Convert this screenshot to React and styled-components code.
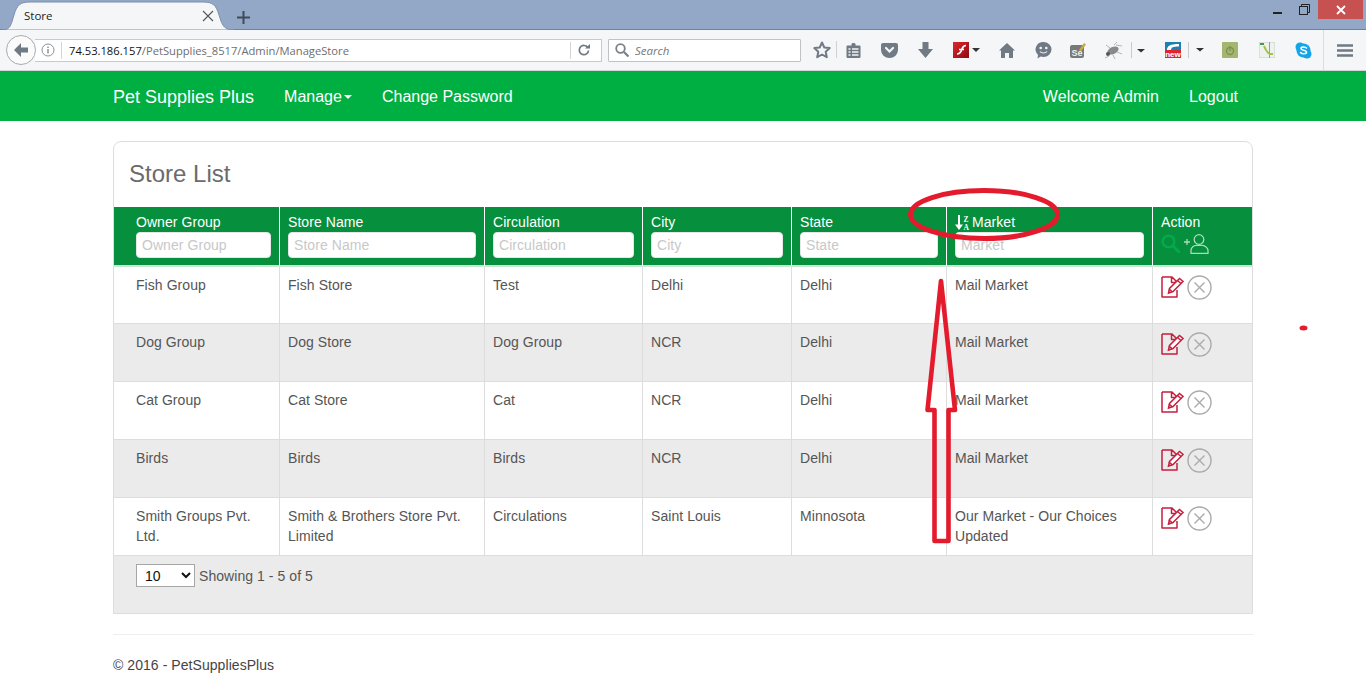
import React from "react";
import styled, { createGlobalStyle } from "styled-components";

const Global = createGlobalStyle`
  html, body { margin: 0; padding: 0; background: #fff; overflow: hidden; }
  body { font-family: "Liberation Sans", Arial, sans-serif; font-size: 14px; color: #555; }
  * { box-sizing: border-box; }
`;

const Page = styled.div`position: relative; width: 1366px; height: 686px; overflow: hidden;`;

/* ---------- browser chrome ---------- */
const TitleBar = styled.div`
  display: flex; align-items: flex-end; height: 30px; background: #93a8c6;
  border-bottom: 1px solid #6f829c; padding-left: 2px;
`;
const Tab = styled.div`
  position: relative; width: 232px; height: 29px; margin-bottom: -1px; display: flex; align-items: center;
  padding: 0 0 0 22px; font: 11.5px "Open Sans", "Noto Sans", sans-serif; color: #222;
`;
const TabShape = styled.svg`position: absolute; left: 0; top: 0;`;
const TabLabel = styled.span`position: relative; flex: 1;`;
const TabClose = styled.svg`position: relative; margin-right: 20px;`;
const PlusIcon = styled.svg`margin: 0 0 5px 3px;`;
const Spacer = styled.div`flex: 1;`;
const WindowControls = styled.div`display: flex; align-self: flex-start; align-items: flex-start; padding-right: 3px;`;
const WinButton = styled.div`
  width: ${p => p.$w}px; height: 19px; display: flex; align-items: center; justify-content: center;
  background: ${p => p.$bg || "transparent"};
`;
const Toolbar = styled.div`
  display: flex; align-items: center; height: 41px; background: #f5f6f7; padding-left: 6px;
  border-bottom: 1px solid #d4d5d7;
`;
const BackButton = styled.div`
  width: 30px; height: 30px; border-radius: 50%; background: #fbfbfb; border: 1px solid #a9abae;
  display: flex; align-items: center; justify-content: center; position: relative; z-index: 1; flex: none;
`;
const UrlBar = styled.div`
  display: flex; align-items: center; width: 567px; height: 23px; margin-left: -1px; padding-left: 6px;
  background: #fff; border: 1px solid #c8cacd; border-left: 0;
  font: 11.2px "Open Sans", "Noto Sans", sans-serif; color: #6e6e6e;
`;
const UrlDivider = styled.span`width: 1px; height: 17px; background: #d4d4d4; margin: ${p => p.$m};`;
const UrlHost = styled.span`color: #111;`;
const UrlFill = styled.span`flex: 1; white-space: nowrap;`;
const ReloadIcon = styled.svg`margin-right: 11px;`;
const SearchBox = styled.div`
  display: flex; align-items: center; gap: 6px; width: 193px; height: 23px; margin-left: 6px; padding-left: 6px;
  background: #fff; border: 1px solid #c0c2c5; border-radius: 1px;
  font: italic 11.5px "Open Sans", "Noto Sans", sans-serif; color: #777;
`;
const ToolSlots = styled.div`display: flex; align-items: center; margin-left: 4px; height: 100%;`;
const Slot = styled.div`
  width: ${p => p.$w}px; height: 100%; flex: none; display: flex; align-items: center; justify-content: center;
  border-left: ${p => (p.$sep ? "1px solid #dcdddf" : "0")};
`;

const Star = () => (
  <svg width="34" height="18" viewBox="0 0 34 18"><path d="M9 1.500l2.300 5 5.400.6-4 3.700 1.100 5.400L9 13.500l-4.800 2.700 1.100-5.400-4-3.700 5.400-.6z" fill="none" stroke="#6f7a84" strokeWidth="2" strokeLinejoin="round" transform="translate(8 0)"/><rect x="31" y="0" width="1" height="17" fill="#cfd1d4"/></svg>
);
const ReadingList = () => (
  <svg width="15" height="15" viewBox="0 0 15 15"><path d="M1.500 2.500h4V1a2 1 0 014 0v1.500h4a1 1 0 011 1V14a1 1 0 01-1 1h-12a1 1 0 01-1-1V3.500a1 1 0 011-1z" fill="#6f7a84"/><path d="M2.500 6h2M2.500 9h2M2.500 12h2M6 6h6.500M6 9h6.500M6 12h6.500" stroke="#f5f6f7" strokeWidth="1.300"/></svg>
);
const Pocket = () => (
  <svg width="17" height="15" viewBox="0 0 17 15"><path d="M2 0h13a2 2 0 012 2v5a8.500 8 0 01-17 0V2a2 2 0 012-2z" fill="#707b85"/><path d="M5 5l3.500 3.500L12 5" fill="none" stroke="#f5f6f7" strokeWidth="2.200" strokeLinecap="round"/></svg>
);
const Download = () => (
  <svg width="15" height="16" viewBox="0 0 15 16"><path d="M4.500 0h6v7H15l-7.500 9L0 7h4.500z" fill="#6f7a84"/></svg>
);
const Flash = () => (
  <svg width="28" height="16" viewBox="0 0 28 16"><defs><linearGradient id="fl" x1="0" y1="0" x2="1" y2="1"><stop offset="0" stopColor="#e0262b"/><stop offset="1" stopColor="#8a0d12"/></linearGradient></defs><rect width="16" height="16" fill="url(#fl)"/><path d="M4 12c3 0 4-2 5-5s2-3.500 4-3.500M6 7.500h5" fill="none" stroke="#fff" strokeWidth="1.700"/><path d="M19 6h8l-4 4z" fill="#333"/></svg>
);
const Home = () => (
  <svg width="16" height="15" viewBox="0 0 16 15"><path d="M8 0l8 7.500h-2V15h-4v-5H6v5H2V7.500H0z" fill="#6f7a84"/></svg>
);
const Smile = () => (
  <svg width="17" height="17" viewBox="0 0 17 17"><path d="M8.500 0a8 7.500 0 110 15c-1 0-2-.2-2.800-.5L2.500 16.500l.5-3.500A7.500 7.500 0 018.500 0z" fill="#6f7a84"/><circle cx="5.700" cy="6" r="1.300" fill="#f5f6f7"/><circle cx="11.300" cy="6" r="1.300" fill="#f5f6f7"/><path d="M5 9.500c1.500 2 5.500 2 7 0" stroke="#f5f6f7" strokeWidth="1.200" fill="none"/></svg>
);
const SeIcon = () => (
  <svg width="16" height="16" viewBox="0 0 16 16"><rect y="3" width="14" height="13" rx="2" fill="#77797a"/><path d="M9 8l5-7 2 1.500-5 7z" fill="#c9a74a"/><text x="1.500" y="14" fontSize="9" fontWeight="700" fontFamily="Liberation Sans" fill="#eee">Se</text></svg>
);
const Bug = () => (
  <svg width="44" height="17" viewBox="0 0 44 17"><ellipse cx="10" cy="8.500" rx="6" ry="3.500" fill="#8a8a8a" transform="rotate(-25 10 8.500)"/><circle cx="5" cy="12" r="2" fill="#555"/><path d="M13 3l6 1M11 3l3-3M7 6L3 3M6 14L2 16M10 13l2 4M14 10l5 2" stroke="#b5b5b5" strokeWidth="1"/><rect x="28" y="0" width="1" height="16" fill="#c8cacd"/><path d="M34 7h8l-4 3.500z" fill="#333"/></svg>
);
const NewIcon = () => (
  <svg width="40" height="16" viewBox="0 0 40 16"><rect width="16" height="16" fill="#1f7fae"/><path d="M2 8c0-4 3-6 12-6v2.500C8 4.500 6 5.500 6 8z" fill="#fff"/><rect y="8" width="16" height="8" fill="#e0232e"/><text x="0.200" y="15" fontSize="8" fontWeight="700" fontFamily="Liberation Sans" fill="#fff">new</text><rect x="23" y="0" width="1" height="16" fill="#c8cacd"/><path d="M31 6h8l-4 3.500z" fill="#333"/></svg>
);
const GreenIcon = () => (
  <svg width="16" height="16" viewBox="0 0 16 16"><rect width="16" height="16" rx="1" fill="#a4b56f"/><circle cx="8" cy="9" r="3.500" fill="none" stroke="#7e9050" strokeWidth="1.300"/><path d="M8 4v5" stroke="#7e9050" strokeWidth="1.300"/></svg>
);
const ChartIcon = () => (
  <svg width="16" height="16" viewBox="0 0 16 16"><rect width="16" height="16" fill="#eef2ee" stroke="#c5cdc5"/><rect x="10" y="0" width="1" height="16" fill="#5ab8c4"/><path d="M1 2h4" stroke="#3f9b4c" strokeWidth="2"/><path d="M5 4l2 4M7 8l3 4M10 12h4" stroke="#a4c24a" strokeWidth="2"/></svg>
);
const Skype = () => (
  <svg width="17" height="17" viewBox="0 0 17 17"><circle cx="5" cy="5" r="4.500" fill="#12a5e8"/><circle cx="12" cy="12" r="4.500" fill="#12a5e8"/><circle cx="8.500" cy="8.500" r="7" fill="#12a5e8"/><path d="M11.500 6c-.7-1.200-5.500-1.800-5.500.5 0 2.200 5.500 1.300 5.500 3.800 0 2-4.800 1.800-6 .2" fill="none" stroke="#fff" strokeWidth="1.600" strokeLinecap="round"/></svg>
);
const Burger = () => (
  <svg width="16" height="13" viewBox="0 0 16 13"><path d="M0 1.500h16M0 6.500h16M0 11.500h16" stroke="#6f7a84" strokeWidth="2.400"/></svg>
);

/* ---------- site nav ---------- */
const Nav = styled.nav`
  display: flex; align-items: center; height: 50px; padding: 1px 113px 0; background: #00af41; color: #fff; font-size: 16px;
`;
const Brand = styled.span`font-size: 18px; margin: 1px 30px 0 0;`;
const NavLink = styled.span`margin-right: ${p => p.$mr ?? 30}px; display: inline-flex; align-items: center;`;
const Caret = styled.i`
  display: inline-block; margin-left: 2px; border-top: 4px solid #fff; border-left: 4px solid transparent; border-right: 4px solid transparent;
`;
const NavRight = styled.div`margin-left: auto; display: flex; padding-right: 15px;`;
const WelcomeLink = styled(NavLink)`letter-spacing: .07px;`;

/* ---------- panel and table ---------- */
const Main = styled.main`margin: 20px 113px 0; letter-spacing: .06px;`;
const Panel = styled.section`border: 1px solid #ddd; border-radius: 8px 8px 0 0; overflow: hidden;`;
const PanelTitle = styled.h2`
  margin: 0; height: 65px; padding: 17px 15px 0; font-size: 24px; line-height: 30px; font-weight: 400; color: #6b6b6b; letter-spacing: 0;
`;
const Table = styled.table`width: 1138px; table-layout: fixed; border-collapse: separate; border-spacing: 0;`;
const Th = styled.th`
  height: 60px; padding: 5px 8px 7px; vertical-align: top; text-align: left; font-weight: 400; color: #fff;
  line-height: 20px; background: #068f3c; border-left: 1px solid #fff; border-bottom: 2px solid #c7e8d4;
  &:first-child { border-left: 0; padding-left: 22px; }
`;
const ThLabel = styled.div`display: flex; align-items: center; gap: 2px; height: 20px;`;
const FilterInput = styled.input`
  display: block; width: 100%; height: 26px; padding: 0 5px; border: 1px solid #e6e6e6; border-radius: 4px; background: #fff;
  font: 14px "Liberation Sans", Arial, sans-serif; letter-spacing: .06px;
  &::placeholder { color: #c8c8c8; opacity: 1; }
`;
const ThIcons = styled.div`display: flex; align-items: flex-start; gap: 4px; padding-top: 2px;`;
const Tr = styled.tr`background: ${p => (p.$alt ? "#ebebeb" : "#fff")};`;
const Td = styled.td`
  height: ${p => p.$h || 58}px; padding: 8px; vertical-align: top; line-height: 20px; color: #555;
  border-left: 1px solid #ddd; border-bottom: 1px solid #ddd;
  &:first-child { border-left: 0; padding-left: 22px; }
`;
const ActionCell = styled.div`display: flex; align-items: flex-start; gap: 3px;`;
const EditSlot = styled.span`display: block; margin-top: 1px; line-height: 0;`;
const PanelFooter = styled.div`
  display: flex; align-items: flex-start; gap: 4px; height: 57px; padding: 8px 22px; background: #ebebeb; color: #555; line-height: 24px;
`;
const PageSize = styled.select`
  width: 59px; height: 23px; padding-left: 4px; background: #fff; border: 1px solid #a6a6a6; color: #111;
  font: 14px "Liberation Sans", Arial, sans-serif;
`;
const Rule = styled.hr`margin: 20px 0 0; border: 0; border-top: 1px solid #eee;`;
const Copy = styled.footer`margin-top: 20px; line-height: 20px; color: #444;`;
const Marks = styled.svg`position: absolute; left: 0; top: 0; pointer-events: none;`;

const SortIcon = () => (
  <svg width="15" height="15" viewBox="0 0 15 15">
    <path d="M4 0v12" stroke="#fff" strokeWidth="2"/><path d="M0 9.500h8L4 15z" fill="#fff"/>
    <text x="8.500" y="6.500" fontSize="7.500" fontWeight="700" fontFamily="Liberation Serif" fill="#fff">Z</text>
    <text x="8.500" y="14.500" fontSize="7.500" fontWeight="700" fontFamily="Liberation Serif" fill="#fff">A</text>
  </svg>
);
const SearchGreen = () => (
  <svg width="19" height="19" viewBox="0 0 19 19"><circle cx="7.500" cy="7.500" r="5.800" fill="none" stroke="#04a94c" strokeWidth="2.600"/><path d="M12 12l6 6" stroke="#04a94c" strokeWidth="3" strokeLinecap="round"/></svg>
);
const AddUser = () => (
  <svg width="25" height="20" viewBox="0 0 25 20" fill="none" stroke="#a9dcbb" strokeWidth="1.300"><circle cx="15" cy="5.500" r="4.800"/><path d="M7 19.300v-3c0-3 3-5 5-5h6c2 0 6 2 6 5v3z"/><path d="M0 8h6M3 5v6"/></svg>
);
const EditIcon = () => (
  <svg width="23" height="22" viewBox="0 0 23 22" fill="none" stroke="#c4203f" strokeWidth="1.500"><path d="M1 1h10l5 5v3M16 14v7H1V1M10.500 1v5.500H16" strokeLinejoin="round"/><path d="M7.500 17l1-4.500L18.500 2.500 22 5.500 12 15.500z" fill="#fff"/><path d="M16.500 4.500l3.500 3M8 13l3.500 3" /></svg>
);
const RemoveIcon = () => (
  <svg width="25" height="25" viewBox="0 0 25 25" fill="none" stroke="#aaa" strokeWidth="1.400"><circle cx="12.500" cy="12.500" r="11.500"/><path d="M7.500 7.500l10 10M17.500 7.500l-10 10"/></svg>
);

const rows = [
  ["Fish Group", "Fish Store", "Test", "Delhi", "Delhi", "Mail Market"],
  ["Dog Group", "Dog Store", "Dog Group", "NCR", "Delhi", "Mail Market"],
  ["Cat Group", "Cat Store", "Cat", "NCR", "Delhi", "Mail Market"],
  ["Birds", "Birds", "Birds", "NCR", "Delhi", "Mail Market"],
  ["Smith Groups Pvt. Ltd.", "Smith & Brothers Store Pvt. Limited", "Circulations", "Saint Louis", "Minnosota", "Our Market - Our Choices Updated"],
];
const columns = ["Owner Group", "Store Name", "Circulation", "City", "State", "Market"];
const widths = [165, 205, 158, 149, 155, 206, 100];

export default function App() {
  return (
    <Page>
      <Global />
      <TitleBar>
        <Tab>
          <TabShape width="232" height="29" viewBox="0 0 232 29">
            <path d="M0 29c9 0 9-6 12-15C15 4 18 1 28 1h173c10 0 13 3 16 13 3 9 4 15 15 15z" fill="#f5f6f7" stroke="#7d90aa" strokeWidth="1"/>
          </TabShape>
          <TabLabel>Store</TabLabel>
          <TabClose width="12" height="12" viewBox="0 0 12 12"><path d="M1 1l10 10M11 1L1 11" stroke="#555" strokeWidth="1.100"/></TabClose>
        </Tab>
        <PlusIcon width="13" height="13" viewBox="0 0 13 13"><path d="M6.500 0v13M0 6.500h13" stroke="#3f4a5a" strokeWidth="2"/></PlusIcon>
        <Spacer />
        <WindowControls>
          <WinButton $w={26}><svg width="9" height="8" viewBox="0 0 9 8"><rect y="6" width="9" height="2" fill="#222"/></svg></WinButton>
          <WinButton $w={28}><svg width="11" height="11" viewBox="0 0 11 11" fill="none" stroke="#222"><rect x=".5" y="2.500" width="8" height="8"/><path d="M2.500 2.500v-2h8v8h-2"/></svg></WinButton>
          <WinButton $w={45} $bg="#c75050"><svg width="10" height="10" viewBox="0 0 10 10"><path d="M1 1l8 8M9 1L1 9" stroke="#fff" strokeWidth="1.800"/></svg></WinButton>
        </WindowControls>
      </TitleBar>
      <Toolbar>
        <BackButton>
          <svg width="16" height="14" viewBox="0 0 16 14"><path d="M8 0L1 7l7 7V9.500h7v-5H8z" fill="#6f7a84"/></svg>
        </BackButton>
        <UrlBar>
          <svg width="14" height="14" viewBox="0 0 14 14" fill="none" stroke="#8c9298"><circle cx="7" cy="7" r="6"/><path d="M7 6v4.500M7 3.500v1.500" strokeWidth="1.500"/></svg>
          <UrlDivider $m="0 7px 0 6px" />
          <UrlFill><UrlHost>74.53.186.157</UrlHost>/PetSupplies_8517/Admin/ManageStore</UrlFill>
          <UrlDivider $m="0 7px 0 0" />
          <ReloadIcon width="12" height="12" viewBox="0 0 12 12" fill="none"><path d="M10.500 6.500A4.600 4.600 0 116.500 1.500c1.500.1 2.400.8 3 1.700" stroke="#6f7a84" strokeWidth="1.700"/><path d="M7 4.500h5V0z" fill="#6f7a84"/></ReloadIcon>
        </UrlBar>
        <SearchBox>
          <svg width="14" height="14" viewBox="0 0 14 14" fill="none" stroke="#7a8188" strokeWidth="1.800"><circle cx="5.500" cy="5.500" r="4.300"/><path d="M9 9l4.500 4.500" strokeWidth="2.200"/></svg>
          Search
        </SearchBox>
        <ToolSlots>
          <Slot $w={34}><Star /></Slot>
          <Slot $w={28}><ReadingList /></Slot>
          <Slot $w={44}><Pocket /></Slot>
          <Slot $w={28}><Download /></Slot>
          <Slot $w={56}><Flash /></Slot>
          <Slot $w={24}><Home /></Slot>
          <Slot $w={48}><Smile /></Slot>
          <Slot $w={22}><SeIcon /></Slot>
          <Slot $w={72}><Bug /></Slot>
          <Slot $w={48}><NewIcon /></Slot>
          <Slot $w={42}><GreenIcon /></Slot>
          <Slot $w={32}><ChartIcon /></Slot>
          <Slot $w={40}><Skype /></Slot>
          <Slot $w={43} $sep><Burger /></Slot>
        </ToolSlots>
      </Toolbar>
      <Nav>
        <Brand>Pet Supplies Plus</Brand>
        <NavLink>Manage<Caret /></NavLink>
        <NavLink>Change Password</NavLink>
        <NavRight>
          <WelcomeLink>Welcome Admin</WelcomeLink>
          <NavLink $mr={0}>Logout</NavLink>
        </NavRight>
      </Nav>
      <Main>
        <Panel>
          <PanelTitle>Store List</PanelTitle>
          <Table>
            <colgroup>{widths.map((w, i) => <col key={i} style={{ width: w }} />)}</colgroup>
            <thead>
              <tr>
                {columns.map(c => (
                  <Th key={c}>
                    <ThLabel>{c === "Market" && <SortIcon />}{c}</ThLabel>
                    <FilterInput placeholder={c} readOnly />
                  </Th>
                ))}
                <Th>
                  <ThLabel>Action</ThLabel>
                  <ThIcons><SearchGreen /><AddUser /></ThIcons>
                </Th>
              </tr>
            </thead>
            <tbody>
              {rows.map((r, i) => (
                <Tr key={i} $alt={i % 2 === 1}>
                  {r.map((c, j) => <Td key={j} $h={i === 0 ? 57 : 58}>{c}</Td>)}
                  <Td $h={i === 0 ? 57 : 58}>
                    <ActionCell><EditSlot><EditIcon /></EditSlot><RemoveIcon /></ActionCell>
                  </Td>
                </Tr>
              ))}
            </tbody>
          </Table>
          <PanelFooter>
            <PageSize defaultValue="10"><option>10</option><option>25</option><option>50</option></PageSize>
            Showing 1 - 5 of 5
          </PanelFooter>
        </Panel>
        <Rule />
        <Copy>© 2016 - PetSuppliesPlus</Copy>
      </Main>
      <Marks width="1366" height="686" viewBox="0 0 1366 686" fill="none" stroke="#e41b2d">
        <ellipse cx="984" cy="214.500" rx="73.500" ry="24" strokeWidth="5"/>
        <path d="M941 281l14 129h-6.500v131h-14V410h-7z" strokeWidth="4.600" strokeLinejoin="round"/>
        <ellipse cx="1303.500" cy="328" rx="4" ry="2.500" fill="#e41b2d" stroke="none"/>
      </Marks>
    </Page>
  );
}
